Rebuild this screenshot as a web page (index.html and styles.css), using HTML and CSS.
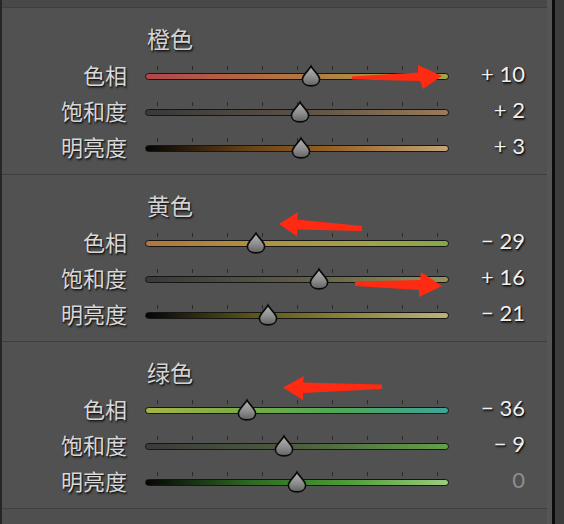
FILE: index.html
```html
<!DOCTYPE html>
<html lang="zh-CN">
<head>
<meta charset="utf-8">
<title>HSL</title>
<link rel="stylesheet" href="styles.css">
</head>
<body>
<div class="page">
  <div class="edge-left"></div>
  <div class="panel">
    <div class="top-band"></div>

    <section class="group">
      <div class="title">橙色</div>
      <div class="row">
        <div class="label">色相</div>
        <div class="slider"><div class="ticks"></div><div class="track t-or-h"></div>
          <svg class="thumb" style="left:166px" viewBox="0 0 22 22"><use href="#drop"/></svg></div>
        <div class="value">+ 10</div>
      </div>
      <div class="row">
        <div class="label">饱和度</div>
        <div class="slider"><div class="ticks"></div><div class="track t-or-s"></div>
          <svg class="thumb" style="left:154.8px" viewBox="0 0 22 22"><use href="#drop"/></svg></div>
        <div class="value">+ 2</div>
      </div>
      <div class="row">
        <div class="label">明亮度</div>
        <div class="slider"><div class="ticks"></div><div class="track t-or-l"></div>
          <svg class="thumb" style="left:156.2px" viewBox="0 0 22 22"><use href="#drop"/></svg></div>
        <div class="value">+ 3</div>
      </div>
    </section>

    <section class="group">
      <div class="title">黄色</div>
      <div class="row">
        <div class="label">色相</div>
        <div class="slider"><div class="ticks"></div><div class="track t-ye-h"></div>
          <svg class="thumb" style="left:111.4px" viewBox="0 0 22 22"><use href="#drop"/></svg></div>
        <div class="value">− 29</div>
      </div>
      <div class="row">
        <div class="label">饱和度</div>
        <div class="slider"><div class="ticks"></div><div class="track t-ye-s"></div>
          <svg class="thumb" style="left:174.4px" viewBox="0 0 22 22"><use href="#drop"/></svg></div>
        <div class="value">+ 16</div>
      </div>
      <div class="row">
        <div class="label">明亮度</div>
        <div class="slider"><div class="ticks"></div><div class="track t-ye-l"></div>
          <svg class="thumb" style="left:122.6px" viewBox="0 0 22 22"><use href="#drop"/></svg></div>
        <div class="value">− 21</div>
      </div>
    </section>

    <section class="group">
      <div class="title">绿色</div>
      <div class="row">
        <div class="label">色相</div>
        <div class="slider"><div class="ticks"></div><div class="track t-gr-h"></div>
          <svg class="thumb" style="left:101.6px" viewBox="0 0 22 22"><use href="#drop"/></svg></div>
        <div class="value">− 36</div>
      </div>
      <div class="row">
        <div class="label">饱和度</div>
        <div class="slider"><div class="ticks"></div><div class="track t-gr-s"></div>
          <svg class="thumb" style="left:139.4px" viewBox="0 0 22 22"><use href="#drop"/></svg></div>
        <div class="value">− 9</div>
      </div>
      <div class="row">
        <div class="label">明亮度</div>
        <div class="slider"><div class="ticks"></div><div class="track t-gr-l"></div>
          <svg class="thumb" style="left:152px" viewBox="0 0 22 22"><use href="#drop"/></svg></div>
        <div class="value zero">0</div>
      </div>
    </section>
    <div class="bottom-band"></div>
  </div>
  <div class="edge-right"></div>
  <div class="outer"></div>

  <svg class="arrows" viewBox="0 0 564 524" width="564" height="524">
    <polygon points="352,76.5 418,72.5 418,65 442,76 423,89 420,81 352,79.5"/>
    <polygon points="279,224 298,212 297,219.5 362,226 362,231 297,229.5 298,237"/>
    <polygon points="355,281.5 420,280 421,272 442,286 419,297 419,290 355,286"/>
    <polygon points="283,387.5 304,376 303,382.5 382,384.5 382,389 303,393 303,400"/>
  </svg>

  <svg class="defs" width="0" height="0">
    <defs>
      <linearGradient id="dropfill" x1="0" y1="0" x2="0" y2="1">
        <stop offset="0" stop-color="#b4b4b4"/>
        <stop offset="0.55" stop-color="#8e8e8e"/>
        <stop offset="1" stop-color="#626262"/>
      </linearGradient>
      <path id="drop" d="M11 1.2 C12.6 4.6 19.6 10.2 19.6 14.2 C19.6 18.4 16 20.9 11 20.9 C6 20.9 2.4 18.4 2.4 14.2 C2.4 10.2 9.4 4.6 11 1.2 Z" fill="url(#dropfill)" stroke="#0a0a0a" stroke-width="1.6"/>
    </defs>
  </svg>
</div>
</body>
</html>
```

FILE: styles.css
```css
html, body {
  margin: 0;
  padding: 0;
  background: #3b3b3b;
}

.page {
  position: relative;
  display: flex;
  width: 564px;
  height: 524px;
  overflow: hidden;
}

.edge-left {
  width: 2px;
  background: #262626;
}

.panel {
  width: 545px;
  border-right: 5px solid #555555;
  background: #515151;
  display: flex;
  flex-direction: column;
}

.edge-right {
  width: 3px;
  background: #0b0b0b;
}

.outer {
  flex: 1;
  background: #3c3c3c;
}

.top-band {
  height: 7px;
  background: #484848;
}

.group {
  border-top: 1px solid #3f3f3f;
  height: 167px;
  box-sizing: border-box;
  padding-top: 12px;
  font-family: "Noto Sans CJK SC", "Noto Sans", sans-serif;
}

.bottom-band {
  flex: 1;
  border-top: 1px solid #3f3f3f;
  background: #4f4f4f;
}

.title {
  height: 36px;
  line-height: 36px;
  padding-left: 145px;
  font-size: 23px;
  color: #d3d3d3;
  text-shadow: 1px 1px 1px #1a1a1a, 1px 2px 2px #2a2a2a;
}

.row {
  display: grid;
  grid-template-columns: 143px 304px 76px;
  height: 36px;
}

.label {
  padding-right: 18px;
  text-align: right;
  line-height: 36px;
  font-size: 22px;
  color: #d8d8d8;
  text-shadow: 1px 1px 1px #1a1a1a, 1px 2px 2px #2a2a2a;
}

.slider {
  position: relative;
  height: 36px;
}

.ticks {
  margin: 10px 0 0 12px;
  width: 281px;
  height: 4px;
  background: repeating-linear-gradient(to right, #2a2a2a 0 1px, transparent 1px 35px);
}

.track {
  margin-top: 3px;
  height: 5px;
  border: 1px solid #161616;
  border-radius: 4px;
}

.thumb {
  position: absolute;
  top: 9px;
  width: 22px;
  height: 22px;
  margin-left: -11px;
  overflow: visible;
}

.value {
  text-align: right;
  line-height: 36px;
  font-family: Lato, "Noto Sans", sans-serif;
  font-size: 22px;
  color: #f0f0f0;
  text-shadow: 1px 1px 1px #111111, 1px 2px 2px #262626;
}

.value.zero {
  color: #8e8e8e;
  text-shadow: none;
}

.t-or-h { background: linear-gradient(to right, #b0464a, #b25a45 20%, #b17c42 55%, #a89a42 85%, #9ea84a); }
.t-or-s { background: linear-gradient(to right, #393939, #5a5046 50%, #9a7c58); }
.t-or-l { background: linear-gradient(to right, #050505, #6a4418 35%, #946024 60%, #c4a476); }
.t-ye-h { background: linear-gradient(to right, #b4743e, #ae9440 40%, #a0a444 75%, #84a84c); }
.t-ye-s { background: linear-gradient(to right, #393939, #5e5c46 50%, #969258); }
.t-ye-l { background: linear-gradient(to right, #050505, #5a5418 35%, #8a8236 65%, #bab47a); }
.t-gr-h { background: linear-gradient(to right, #a6b444, #74ac46 35%, #4ea658 65%, #3ea49a); }
.t-gr-s { background: linear-gradient(to right, #3b3b3b, #4c5e3e 50%, #62a246); }
.t-gr-l { background: linear-gradient(to right, #050505, #2e6a22 35%, #4a9a36 65%, #9ccc7e); }

.arrows {
  position: absolute;
  left: 0;
  top: 0;
  pointer-events: none;
}

.arrows polygon {
  fill: #ff2a12;
}

.defs {
  position: absolute;
  width: 0;
  height: 0;
}
```
